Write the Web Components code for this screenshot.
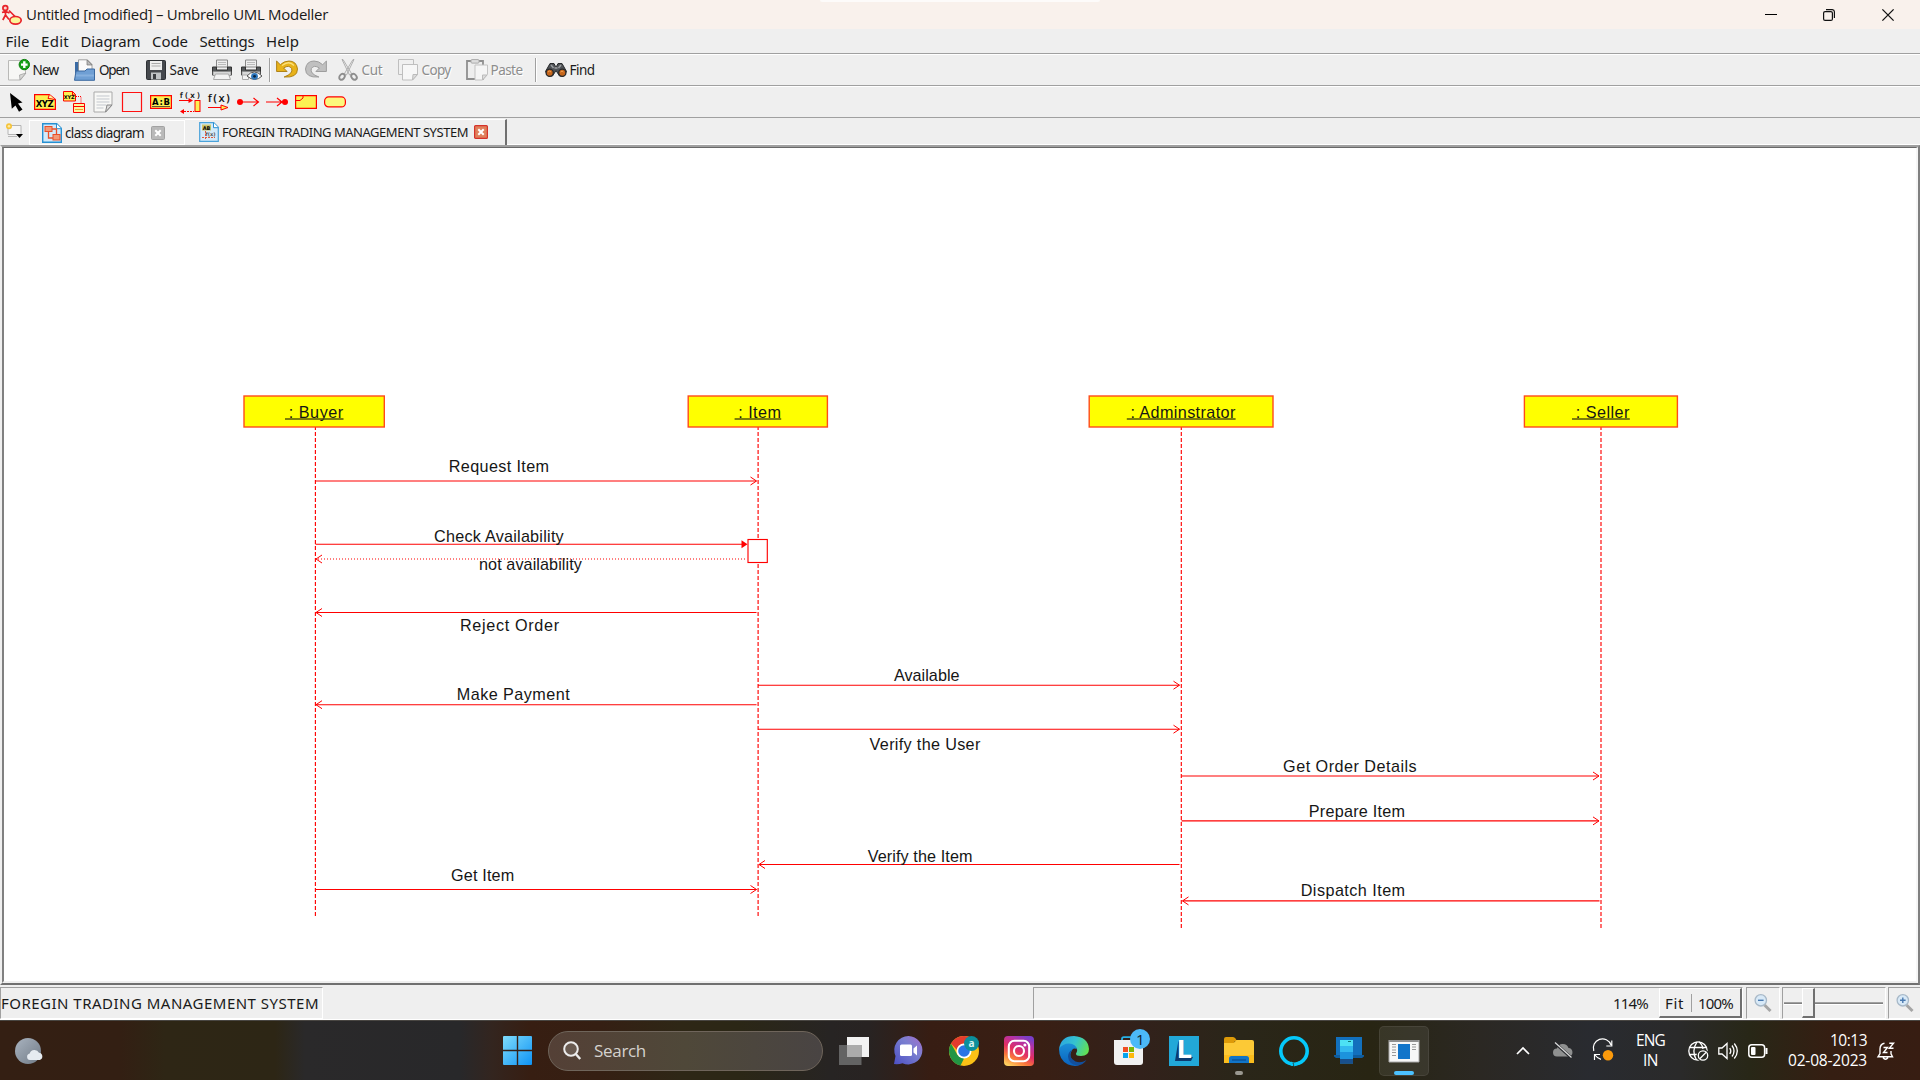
<!DOCTYPE html>
<html lang="en">
<head>
<meta charset="utf-8">
<title>Umbrello UML Modeller</title>
<style>
html,body{margin:0;height:100%;overflow:hidden;background:#efefef}
body{font-family:"Noto Sans","Open Sans",sans-serif;color:#1a1a1a}
</style>
</head>
<body>
<uml-desktop></uml-desktop>
<script>
const ICONS = {
app:[20,20,`<g fill="none" stroke="#e8232a" stroke-width="1.7"><circle cx="3.3" cy="3" r="2.4" fill="#fbd5d0"/><path d="M3.5 5.5V10M0 7.5l3.5-1 4 1.5M3.5 10L.8 15M3.5 10l3.5 4.5M7 5.5l6 6"/><ellipse cx="13.5" cy="15.3" rx="5.7" ry="3.8" fill="#fbf59a"/></g>`],
min:[12,12,`<path d="M0 5.5h12" stroke="#000"/>`],
restore:[12,12,`<g fill="none" stroke="#111" stroke-width="1.2"><rect x=".6" y="2.6" width="8.8" height="8.8" rx="1.5"/><path d="M3 .6h6.3a2.2 2.2 0 0 1 2.1 2.1V9"/></g>`],
close:[12,12,`<path d="M.4.4l11.2 11.2M11.6.4L.4 11.6" stroke="#111" stroke-width="1.3"/>`],
newdoc:[22,22,`<path d="M.5 1.5h17v13l-5 6.5H.5z" fill="#f7f7f5" stroke="#b9b9b7"/><path d="M18 14l-6 7-.5-5z" fill="#d8d8d6" stroke="#999" stroke-width=".7"/><circle cx="16.3" cy="5.6" r="5.2" fill="#16a016" stroke="#0b800b"/><path d="M16.3 2.3v6.6M13 5.6h6.6" stroke="#fff" stroke-width="2.4"/>`],
open:[22,22,`<path d="M1 3h6l2 2v9H1z" fill="#3a6aa4"/><path d="M4.500 .8h9l4.500 4.500V13H4.500z" fill="#fafafa" stroke="#8b8b8b" stroke-width=".8"/><path d="M13 1v5h5z" fill="#bbb" stroke="#777" stroke-width=".7"/><path d="M2 12h9l2-2h7.500v11.300H.5z" fill="#6f9fd4" stroke="#3b69a0"/><path d="M2 16.500h18" stroke="#87b0de" stroke-width="2"/>`],
save:[20,20,`<rect x=".5" y=".5" width="19" height="19" rx="1" fill="#45484d" stroke="#2d3034"/><rect x="4" y="1" width="12" height="9" fill="#eee"/><path d="M5.500 3.500h9M5.500 6h9" stroke="#aaa"/><rect x="5" y="12.500" width="10" height="7" fill="#bfc3c6"/><rect x="7" y="14" width="3" height="5" fill="#3b3e42"/>`],
print:[22,22,`<path d="M5.500 1h11v7h-11z" fill="#eee" stroke="#888"/><path d="M7 3.500h8M7 5.500h8" stroke="#bbb"/><path d="M1.500 8h4v3h11V8h4v8h-19z" fill="#55585a" stroke="#333"/><path d="M2 12.500h18v4H2z" fill="#d7d8d8" stroke="#888" stroke-width=".7"/><path d="M4.500 15h13l2 5.500h-17z" fill="#f3f3f3" stroke="#aaa"/>`],
preview:[22,22,`<path d="M5.500 1h11v7h-11z" fill="#eee" stroke="#888"/><path d="M7 3.500h8M7 5.500h8" stroke="#bbb"/><path d="M1.500 8h4v3h11V8h4v8h-19z" fill="#55585a" stroke="#333"/><path d="M2 12.500h18v4H2z" fill="#d7d8d8" stroke="#888" stroke-width=".7"/><path d="M2.500 16h6v4.500h-6z" fill="#f3f3f3" stroke="#aaa"/><path d="M7 17q7-8 15 0-7 7-15 0z" fill="#fff" stroke="#555"/><circle cx="14.500" cy="17.300" r="3.400" fill="#2f78bd"/><circle cx="14.500" cy="17.300" r="1.400" fill="#0c2540"/>`],
undo:[22,20,`<path d="M.6 1v10.500h10.500L7.600 8q5.500-3.500 8 .5 2 5-7.500 8.500Q21.500 18 21.500 9 20.500 1 13 1 8 1 4.300 4.700z" fill="#e8b21a" stroke="#a87a0c" stroke-width=".9"/><path d="M6 5.500q7-5.500 12 0" fill="none" stroke="#fbe07a" stroke-width="1.200"/>`],
redo:[22,20,`<g transform="matrix(-1 0 0 1 22 0)"><path d="M.6 1v10.500h10.500L7.600 8q5.500-3.500 8 .5 2 5-7.500 8.500Q21.500 18 21.500 9 20.500 1 13 1 8 1 4.300 4.700z" fill="#c0c0c0" stroke="#979797" stroke-width=".9"/></g>`],
cut:[20,22,`<path d="M4 .5l1 0 8.500 14-2 1.500zM16 .5l-1 0L6.500 14.500l2 1.500z" fill="#efefef" stroke="#a8a8a8" stroke-width=".9"/><g fill="none" stroke="#8e8e8e" stroke-width="1.900"><ellipse cx="4" cy="17.800" rx="2.400" ry="3.200" transform="rotate(40 4 17.800)"/><ellipse cx="16" cy="17.800" rx="2.400" ry="3.200" transform="rotate(-40 16 17.800)"/></g>`],
copy:[20,22,`<path d="M.5.5h15v15H.5z" fill="#f0f0f0" stroke="#bfbfbf"/><path d="M4.500 5.500h15v10l-5 5.500h-10z" fill="#f7f7f7" stroke="#bfbfbf"/><path d="M19.500 15.500h-4.500l-.5 5.500z" fill="#ddd" stroke="#bbb"/>`],
paste:[22,22,`<path d="M1 2h16v18H1z" fill="#eee" stroke="#8f8f8f" stroke-width="1.800"/><rect x="5" y=".6" width="8" height="3.500" rx="1" fill="#ddd" stroke="#aaa"/><path d="M9 6h12.500v9.500l-5 5.500H9z" fill="#f5f5f5" stroke="#c3c3c3"/><path d="M21 16h-4.500v5z" fill="#ddd" stroke="#bbb"/>`],
find:[22,14,`<path d="M5 .5h4l1.500 3h1L13 .5h4l4.500 8-3 4.500h-4L11 7.500 7.500 13h-4l-3-4.500z" fill="#505357" stroke="#27292b"/><path d="M6 2l2.500 3M16 2l-2.500 3M9.500 5h3" stroke="#9a9da0" stroke-width="1.500"/><circle cx="4.700" cy="9.800" r="3.600" fill="#c5651b" stroke="#28292b" stroke-width="1.300"/><circle cx="17.300" cy="9.800" r="3.600" fill="#c5651b" stroke="#28292b" stroke-width="1.300"/><path d="M3 9q1.500-2 3 0M15.500 9q1.500-2 3 0" stroke="#f3a251" fill="none"/>`],
pointer:[14,19,`<path d="M1 0L13.500 9.500 9 10.500 13.500 16.500 10 18.800 6.500 12.500 2.800 15.800z"/>`],
xyz:[22,16,`<path d="M.6.6h14.800l6 5v9.800H.6z" fill="#fcf052" stroke="#f00" stroke-width="1.200"/><path d="M15.400.6L14 4.500q4 0 7.400 1.500" fill="#fff7a0" stroke="#f00"/><text x="10.700" y="13" font-family="DejaVu Sans" font-size="8.500" font-weight="bold" text-anchor="middle" textLength="18">XYZ</text>`],
xyzlink:[22,22,`<path d="M.5.5h9l3 3V10h-12z" fill="#fcf052" stroke="#f00"/><path d="M9.500.5V4h3" fill="none" stroke="#f00"/><text x="6.200" y="8.300" font-family="DejaVu Sans" font-size="5" font-weight="bold" text-anchor="middle">XYZ</text><path d="M13 5.500h5V12" fill="none" stroke="#f00" stroke-dasharray="1 1"/><path d="M10.500 12.500h11v9h-11z" fill="#fcf7a0" stroke="#f00"/><path d="M10.500 15.500h11" stroke="#f00"/><path d="M12 18.500h8" stroke="#f0a030"/>`],
note:[20,22,`<path d="M1 1h18v13l-6 7H1z" fill="#f8f8f6" stroke="#a9a9a9"/><path d="M3.500 5h13M3.500 8h13M3.500 11h13M3.500 14h10M3.500 17h7" stroke="#c3c7cd"/><path d="M19 14h-5l-1.500 7z" fill="#ddd" stroke="#888"/>`],
box:[20,20,`<path d="M.5.5h19v19H.5z" fill="none" stroke="#f11" stroke-width="1.200"/>`],
ab:[22,14,`<path d="M.6.6h20.800v12.800H.6z" fill="#fcf052" stroke="#f00" stroke-width="1.200"/><text x="11" y="9.700" font-family="DejaVu Sans" font-size="8.500" font-weight="bold" text-anchor="middle" textLength="18">A:B</text><path d="M2 11.500h18" stroke="#333" stroke-width=".8"/>`],
fx1:[22,22,`<text x="11" y="6.500" font-family="DejaVu Sans" font-size="7.500" text-anchor="middle" textLength="20" stroke="#000" stroke-width=".2">f(x)</text><path d="M0 9.500h13" stroke="#f00"/><path d="M9.500 7l4.500 2.500L9.500 12z" fill="#f00"/><rect x="16" y="9.500" width="5" height="11" fill="#fcf052" stroke="#f00"/><path d="M2 20.500h13" stroke="#f00" stroke-dasharray="2 1"/><path d="M5 18l-4 2.500L5 23z" fill="#f00"/>`],
fx2:[22,18,`<text x="11" y="8.700" font-family="DejaVu Sans" font-size="10.500" text-anchor="middle" textLength="22" stroke="#000" stroke-width=".2">f(x)</text><path d="M0 14.500h14" stroke="#f00"/><path d="M13 12l7 2.500-7 2.500z" fill="#fcf052" stroke="#f00"/>`],
found:[22,10,`<circle cx="3" cy="5" r="3" fill="#f00"/><path d="M3 5h18M16.500 1l5 4-5 4" fill="none" stroke="#f00" stroke-width="1.200"/>`],
lost:[22,10,`<circle cx="19" cy="5" r="3" fill="#f00"/><path d="M0 5h18M11 1l5 4-5 4" fill="none" stroke="#f00" stroke-width="1.200"/>`],
frag:[22,14,`<path d="M.6.6h20.800v12.800H.6z" fill="#fcf052" stroke="#f00" stroke-width="1.200"/><path d="M1 5.500h4l3-2.500V1" fill="none" stroke="#f00"/>`],
pre:[22,12,`<rect x=".6" y=".9" width="20.800" height="10" rx="4" fill="#fcf87c" stroke="#f00" stroke-width="1.200"/>`],
newtab:[18,16,`<path d="M3 2.500h13v9H3z" fill="#f6f6f6" stroke="#b4b4b4"/><path d="M3 13.500h9" stroke="#b8b8b8"/><circle cx="4" cy="3.300" r="3" fill="#f5c43a"/><circle cx="4" cy="3.300" r="1.300" fill="#ffe9a0"/><path d="M11 11h7l-3.500 4z"/>`],
tabclass:[20,20,`<path d="M.7.7h14l4.600 4.600v14H.7z" fill="#d3eafa" stroke="#2690d2" stroke-width="1.400"/><path d="M14.500.7v5h5" fill="#fff" stroke="#2690d2"/><g fill="#f39a78" stroke="#e8502a"><rect x="3" y="3.500" width="7" height="5"/><rect x="11" y="11.500" width="7" height="5.500"/></g><path d="M10 6h4.500v5M6.500 9v6H11" fill="none" stroke="#e8502a" stroke-width="1.300"/>`],
tabseq:[20,20,`<path d="M.7.7h14l4.600 4.600v14H.7z" fill="#d3eafa" stroke="#4aa2da" stroke-width="1.200"/><path d="M14.500.7v5h5" fill="#fff" stroke="#2690d2"/><rect x="3" y="2.500" width="9" height="6" fill="#cfc56a"/><text x="7.500" y="7.600" font-family="DejaVu Sans" font-size="5" font-weight="bold" text-anchor="middle">AB</text><path d="M6.500 9v8M3 15.500h13" stroke="#e35b3d" stroke-dasharray="2 1"/><text x="11.500" y="13.800" font-family="DejaVu Sans" font-size="5" font-weight="bold" text-anchor="middle" fill="#555">f(x)</text>`],
xgray:[14,14,`<rect x=".5" y=".5" width="13" height="13" rx="1" fill="#b9b9b9" stroke="#a2a2a2"/><path d="M4.300 4.300l5.400 5.400M9.700 4.300L4.300 9.700" stroke="#fff" stroke-width="2"/>`],
xred:[14,14,`<rect x=".6" y=".6" width="12.800" height="12.800" rx="1" fill="#e0805c" stroke="#d5322a" stroke-width="1.200"/><path d="M4.300 4.300l5.400 5.400M9.700 4.300L4.300 9.700" stroke="#fff" stroke-width="2"/>`],
zout:[18,18,`<path d="M10.500 11l6 6" stroke="#a5a5a5" stroke-width="3"/><circle cx="6.800" cy="6.300" r="5.700" fill="#d8e9f7" stroke="#a8b9c8" stroke-width="1.300"/><path d="M4 6.300h5.600" stroke="#4a7ab0" stroke-width="1.400"/>`],
zin:[18,18,`<path d="M10.500 11l6 6" stroke="#a5a5a5" stroke-width="3"/><circle cx="6.800" cy="6.300" r="5.700" fill="#d8e9f7" stroke="#a8b9c8" stroke-width="1.300"/><path d="M4 6.300h5.600M6.800 3.500v5.600" stroke="#4a7ab0" stroke-width="1.400"/>`],
weather:[28,26,`<defs><linearGradient id="m" x1="0" y1="0" x2="1" y2="1"><stop stop-color="#a9b3bf"/><stop offset="1" stop-color="#717b87"/></linearGradient></defs><circle cx="13" cy="13" r="13" fill="url(#m)"/><path d="M15 22a3.300 3.300 0 0 1-.3-6.500A5 5 0 0 1 24 14.800a3.700 3.700 0 0 1 .8 7.200z" fill="#e6ebf1"/>`],
win:[29,29,`<defs><linearGradient id="w" x1="0" y1="0" x2="1" y2="1" gradientUnits="objectBoundingBox"><stop stop-color="#7fdcfb"/><stop offset="1" stop-color="#0e93f5"/></linearGradient></defs><path d="M0 1q0-1 1-1h12.800v13.800H0zM15.200 0H28q1 0 1 1v12.800H15.200zM0 15.200h13.800V29H1q-1 0-1-1zM15.200 15.200H29V28q0 1-1 1H15.200z" fill="url(#w)"/>`],
search:[18,19,`<circle cx="8" cy="8" r="6.800" fill="#ffffff22" stroke="#ececec" stroke-width="2"/><path d="M12.800 13l4.400 5" stroke="#ececec" stroke-width="2.400"/>`],
taskview:[30,28,`<rect x="8" y="0" width="22" height="20" fill="#f2f2f2"/><rect x="0" y="8" width="22.500" height="20" fill="#636363"/><rect x="8" y="8" width="14.500" height="12" fill="#ababab"/>`],
chat:[29,29,`<defs><linearGradient id="c" x1="1" y1="0" x2="0" y2="1"><stop stop-color="#a56ccc"/><stop offset=".4" stop-color="#7a7fd0"/><stop offset="1" stop-color="#4c4fc4"/></linearGradient></defs><path d="M14.500 0a14.200 14.200 0 1 1-6 27.200Q5 28.500 0 28L1.500 20A14.200 14.200 0 0 1 14.500 0z" fill="url(#c)"/><rect x="6" y="8.500" width="12" height="11.500" rx="1.500" fill="#fff"/><path d="M19.500 12.500l3.500-3v10l-3.500-3z" fill="#fff"/>`],
chrome:[30,30,`<circle cx="15" cy="15" r="15" fill="#fbc116"/><path d="M2 7.500L8.500 19l6.500 3.500L11.500 29.600A15 15 0 0 1 2 7.500z" fill="#229544"/><path d="M2 7.500A15 15 0 0 1 28 7.500H15q-6 1-6.500 7z" fill="#e33b2e"/><circle cx="15" cy="15" r="7.500" fill="#fff"/><circle cx="15" cy="15" r="5.800" fill="#2a75e6"/><circle cx="22.500" cy="7.500" r="7.500" fill="#0c8f9c"/><text x="22.500" y="11" font-family="Open Sans" font-size="10" font-weight="bold" fill="#d9f3f3" text-anchor="middle">a</text>`],
insta:[30,30,`<defs><linearGradient id="i" x1=".2" y1="1" x2=".7" y2="0"><stop stop-color="#fdd05f"/><stop offset=".25" stop-color="#fb7a3a"/><stop offset=".5" stop-color="#e32f63"/><stop offset=".8" stop-color="#b532a5"/><stop offset="1" stop-color="#7a3ec8"/></linearGradient></defs><rect width="30" height="30" rx="4" fill="url(#i)"/><g fill="none" stroke="#fff" stroke-width="2.100"><rect x="4.800" y="4.800" width="20.400" height="20.400" rx="5.500"/><circle cx="15" cy="15" r="5"/></g><circle cx="20.900" cy="9" r="1.500" fill="#fff"/>`],
edge:[30,30,`<defs><linearGradient id="e1" x1="0" y1=".3" x2="1" y2=".6"><stop stop-color="#2ba6e0"/><stop offset=".5" stop-color="#36c3cf"/><stop offset="1" stop-color="#62e052"/></linearGradient><linearGradient id="e2" x1="0" y1="0" x2="0" y2="1"><stop stop-color="#1b8fd8"/><stop offset="1" stop-color="#0a62bd"/></linearGradient></defs><path d="M0 13Q2 0 15 0 29 1 30 13 30 20 22 20q-5.500 0-5-2.500 2-3 .5-5.500Q10 5 0 13z" fill="url(#e1)"/><path d="M0 13q3.500-5.500 10-5.500 7 .5 8 6-2.500-2-5 .5-5 8 4 13.500 1.500 1 3.500 1.500Q16 31 9 28.500 0 24 0 13z" fill="url(#e2)"/><path d="M12.500 14q-3.500 8 4 11.500 5.500 2 11-1.500Q24 29 18.500 29.600 9.500 28.500 9 20.500q.3-4.500 3.500-6.500z" fill="#124f9c"/>`],
store:[36,36,`<path d="M8 15V10q0-1.800 1.800-1.800h9Q20 8.200 20 10v5" fill="none" stroke="#27b1e6" stroke-width="1.800"/><path d="M0 11h29v22q0 3-3 3H3q-3 0-3-3z" fill="#f1f1f1"/><path d="M9 18h5v5H9z" fill="#f04e23"/><path d="M15 18h5v5h-5z" fill="#7db705"/><path d="M9 24h5v5H9z" fill="#05a3ee"/><path d="M15 24h5v5h-5z" fill="#fdb80a"/><circle cx="26" cy="10" r="10" fill="#4cb9f8"/><text x="26.200" y="15.500" font-family="Open Sans" font-size="15" fill="#12232f" text-anchor="middle">1</text>`],
lapp:[30,30,`<rect width="30" height="30" fill="#22a8d8"/><path d="M9.500 4L6 25h16l2-4H13z" fill="#0c3b70"/><text x="7.500" y="22" font-family="Open Sans" font-size="25" font-weight="bold" fill="#fff" textLength="15.500" lengthAdjust="spacingAndGlyphs">L</text>`],
folder:[30,28,`<path d="M0 2q0-2 2-2h7q1.500 0 2.500 1.500L13 4h-2L8 9H0z" fill="#dd9a08"/><path d="M0 6h9.500l3-3H28q2 0 2 2v21H0z" fill="#fcc936"/><path d="M0 18h30v8H0z" fill="#fbbd1d"/><path d="M5 26v-4.500q0-2.500 2.500-2.500h15q2.500 0 2.500 2.500V26z" fill="#1175c8"/><path d="M8 23h14" stroke="#0a4f94" stroke-width="1.300"/>`],
alexa:[30,30,`<circle cx="15" cy="15" r="13.200" fill="none" stroke="#05c8fa" stroke-width="3.600"/><path d="M12.200 25.500q2.500 1 2.600 4.600l-3-.4z" fill="#05c8fa"/><path d="M14.800 30.500q-.3-3.200 2.700-4.300 5-1.300 6.500-3.500l1.500 2.300q-3.500 3.300-10.700 5.500z" fill="#05c8fa"/><path d="M14 27q.8 1 .7 3.500" stroke="#2b261a" stroke-width=".8" fill="none"/>`],
phone:[30,27,`<rect x="2" y="0" width="26" height="19" fill="#1270bd"/><path d="M0 18h30v1.500L28 21H2l-2-1.500z" fill="#0f5d9f"/><path d="M6 3h13v23.500H6z" fill="#1c93dd"/><path d="M6 3h13v6H6z" fill="#4de1f4"/><path d="M6 9h13v6H6z" fill="#32b9ef"/><path d="M6 22h13v4.500H6z" fill="#184f8c"/><path d="M14 4.500h3" stroke="#177"/>`],
appwin:[30,22,`<rect width="30" height="22" fill="#f7f7f7"/><path d="M0 0h30v2H0z" fill="#8f8f8f"/><rect x="9" y="4" width="12" height="15" fill="#1275ca"/><path d="M3 4.500h4M3 7h4M3 10h4M3 12.500h4M3 15.500h4M23 4.500h4M23 7h4M23 9.500h4" stroke="#999"/><path d="M0 0v22h30V0" fill="none" stroke="#aaa"/>`],
chev:[14,8,`<path d="M1 7l6-6 6 6" fill="none" stroke="#fff" stroke-width="1.700"/>`],
cloud:[20,17,`<path d="M4 14.500a4 4 0 0 1 0-8A6 6 0 0 1 15.500 6a4.300 4.300 0 0 1 .5 8.500z" fill="#8f9090"/><path d="M2 1l16.500 15" stroke="#26282c" stroke-width="3"/><path d="M2 .5l16.500 15" stroke="#ddd" stroke-width="1.200"/>`],
sync:[21,21,`<g fill="none" stroke="#fff" stroke-width="1.200"><path d="M.8 11A9 9 0 0 1 18 5M18.800.5V6h-5.500M8 19.300Q4.500 18.500 2 15M1.500 20v-5.500H7"/></g><circle cx="15" cy="15.300" r="5.200" fill="#fb9a0c"/>`],
globe:[21,20,`<g fill="none" stroke="#fff" stroke-width="1.300"><circle cx="10" cy="10" r="9.200"/><path d="M1.500 6.500h17M1.500 13.500H9M9 .8Q3 10 8.500 19M11 .8q4 3.500 4 8"/></g><circle cx="15" cy="14.500" r="6.500" fill="#292a25"/><circle cx="15" cy="14.500" r="4.700" fill="none" stroke="#fff" stroke-width="1.300"/><path d="M11.800 17.700l6.400-6.400" stroke="#fff" stroke-width="1.300"/>`],
speaker:[20,18,`<g fill="none" stroke="#fff" stroke-width="1.300"><path d="M.8 6v6H4l5 4.500v-15L4 6zM11.800 6q2 3 0 6M14 3.500q4 5.500 0 11M16.300 1.500q6 7.500 0 15"/></g>`],
battery:[20,14,`<rect x=".8" y=".8" width="15.800" height="12.400" rx="3" fill="none" stroke="#fff" stroke-width="1.500"/><rect x="3" y="3" width="4.500" height="8" rx="1" fill="#fff"/><path d="M18.500 4v6" stroke="#fff" stroke-width="2"/>`],
bell:[18,18,`<path d="M7.500 1.200Q3 2 3 7v4.500L1 14.800h14.500l-1.500-3V9M6 15.500q2.500 3.500 5 0" fill="none" stroke="#fff" stroke-width="1.400"/><path d="M6.500 5.500h4l-4 5h4M12.300 1.200h4.200l-4.200 5h4.200" fill="none" stroke="#fff" stroke-width="1.400"/>`]
};

/* <ui-icon name="…">: one inline SVG at its natural size */
customElements.define('ui-icon', class extends HTMLElement{
  connectedCallback(){
    const [w,h,b]=ICONS[this.getAttribute('name')];
    this.attachShadow({mode:'open'}).innerHTML=`<style>:host{display:block;flex:none;width:${w}px;height:${h}px}svg{display:block;overflow:visible}</style><svg width="${w}" height="${h}" viewBox="0 0 ${w} ${h}">${b}</svg>`;
  }
});

/* <fit-label w="…">: tracks its text so that it fills the given width */
customElements.define('fit-label', class extends HTMLElement{
  connectedCallback(){
    const w=+this.getAttribute('w'), r=this.attachShadow({mode:'open'});
    r.innerHTML=`<style>:host{display:block;flex:none;width:${w}px;white-space:nowrap;line-height:20px}span{display:inline-block;margin-left:-1px}</style><span><slot></slot></span>`;
    const s=r.querySelector('span'), n=this.textContent.length;
    s.style.letterSpacing=((w-s.getBoundingClientRect().width+1)/n).toFixed(3)+'px';
  }
});

customElements.define('title-bar', class extends HTMLElement{
  connectedCallback(){
    this.attachShadow({mode:'open'}).innerHTML=`<style>
    :host{display:flex;align-items:center;height:29px;background:#f9f1ec;padding:0 26px 0 2px;box-sizing:border-box;font:15px "Open Sans",sans-serif;color:#1a1a1a}
    .mid{flex:1;align-self:flex-start;display:flex;padding-left:492px}
    .mid i{width:280px;height:2px;background:#fdfbfa;border-radius:0 0 4px 4px}
    .c{display:flex;gap:47px}</style>
    <ui-icon name="app"></ui-icon><fit-label w="301" style="margin:0 0 2px 5px">Untitled [modified] – Umbrello UML Modeller</fit-label>
    <div class="mid"><i></i></div>
    <div class="c"><ui-icon name="min" style="margin-right:-1px"></ui-icon><ui-icon name="restore"></ui-icon><ui-icon name="close"></ui-icon></div>`;
  }
});

customElements.define('menu-bar', class extends HTMLElement{
  connectedCallback(){
    this.attachShadow({mode:'open'}).innerHTML=`<style>
    :host{display:flex;align-items:center;gap:12.500px;height:24px;padding-left:6.500px;font-size:15px}</style>
    <fit-label w="23">File</fit-label><fit-label w="27">Edit</fit-label><fit-label w="59">Diagram</fit-label><fit-label w="35">Code</fit-label><fit-label w="54">Settings</fit-label><fit-label w="32">Help</fit-label>`;
  }
});

/* tool-strip: a raised toolbar row with a groove above */
customElements.define('tool-strip', class extends HTMLElement{
  connectedCallback(){
    this.attachShadow({mode:'open'}).innerHTML=`<style>
    :host{display:flex;align-items:center;height:32px;box-sizing:border-box;border-top:1px solid #a0a0a0;box-shadow:inset 0 1px #fff;padding-top:1px;font-size:13.500px}</style><slot></slot>`;
  }
});
customElements.define('tool-button', class extends HTMLElement{
  connectedCallback(){
    const g=this.getAttribute('gap')||4, off=this.hasAttribute('off'), t=this.getAttribute('label');
    this.attachShadow({mode:'open'}).innerHTML=`<style>:host{display:flex;align-items:center;gap:${g}px;flex:none;${off?'color:#8d8d8d;text-shadow:1px 1px #fff':''}}</style>
    <ui-icon name="${this.getAttribute('icon')}"></ui-icon>${t?`<fit-label w="${this.getAttribute('w')}">${t}</fit-label>`:''}`;
  }
});
customElements.define('tool-sep', class extends HTMLElement{
  connectedCallback(){
    this.attachShadow({mode:'open'}).innerHTML=`<style>:host{display:block;flex:none;width:1px;height:24px;background:#a0a0a0;border-right:1px solid #fff}</style>`;
  }
});

customElements.define('tab-strip', class extends HTMLElement{
  connectedCallback(){
    this.attachShadow({mode:'open'}).innerHTML=`<style>
    :host{display:flex;height:28px;box-sizing:border-box;border-top:1px solid #a0a0a0;align-items:stretch;font-size:13.500px}
    .n{width:29px;padding:5px 0 0 5px;box-sizing:border-box}
    .a{width:156px;box-sizing:border-box;display:flex;align-items:center;margin-top:2px;padding-left:12px;border:1px solid #fff}
    .b{width:322px;box-sizing:border-box;display:flex;align-items:center;padding:0 0 2px 14px;margin-top:1px;border-top:1px solid #fff;border-right:2px solid #707070}
    .r{flex:1;border-bottom:1px solid #fff}</style>
    <div class="n"><ui-icon name="newtab"></ui-icon></div>
    <div class="a"><ui-icon name="tabclass"></ui-icon><fit-label w="78" style="margin:0 7px 0 4px">class diagram</fit-label><ui-icon name="xgray"></ui-icon></div>
    <div class="b"><ui-icon name="tabseq"></ui-icon><fit-label w="245" style="margin:0 6px 0 4px;font-size:13px">FOREGIN TRADING MANAGEMENT SYSTEM</fit-label><ui-icon name="xred"></ui-icon></div>
    <div class="r"></div>`;
  }
});

/* sequence diagram on a free canvas; coordinates are window pixels */
customElements.define('sequence-diagram', class extends HTMLElement{
  connectedCallback(){
    const objs=[
      [244,384.300,315.400,285,343.500,': Buyer',916],
      [688.200,827.400,758.100,734.600,781.200,': Item',916],
      [1089.200,1273,1181.300,1126.800,1235.600,': Adminstrator',928],
      [1524.400,1677.400,1601,1572,1629.800,': Seller',928]];
    const msgs=[
      [315.500,756.500,481,'r'],[315.500,742,544.200,'f'],[745,316,559,'d'],[756.500,316,612.500,'l'],
      [758,1179.500,685.200,'r'],[756.500,316,704.700,'l'],[758,1179.500,729.200,'r'],
      [1181.500,1599,776,'r'],[1181.500,1599,820.900,'r'],[1179.500,759,864.500,'l'],
      [315.500,756.500,889.500,'r'],[1599.500,1182.500,900.900,'l']];
    const txt=[
      ['Request Item',449,548.600,472],['Check Availability',434.300,563.200,542],['not availability',479.300,581.400,570],
      ['Reject Order',460.200,558.600,631],['Available',894.200,959.100,681],['Make Payment',457.100,569.200,700],
      ['Verify the User',869.900,979.800,750],['Get Order Details',1283.400,1416.200,772],['Prepare Item',1309,1404.600,817],
      ['Verify the Item',868,972,862],['Get Item',451.200,513.800,881],['Dispatch Item',1301,1404.600,896]];
    let s='';
    for(const [l,r,c,u1,u2,t,e] of objs){
      s+=`<path d="M${c} 426V${e}" stroke-dasharray="4 2"/>
      <rect x="${l}" y="396" width="${r-l}" height="31" fill="#ff0" stroke="#ff4b1a" stroke-width="1.400"/>
      <text x="${u1+3.7}" y="418" textLength="${u2-u1-4}">${t}</text><path d="M${u1} 419H${u2}" stroke="#55550a" stroke-width="1.600"/>`;
    }
    for(const [a,b,y,k] of msgs){
      const d=b>a?-6:6;
      s+=`<path d="M${a} ${y}H${b}" ${k=='d'?'stroke-dasharray="1 2"':''}/>`;
      s+= k=='f'?`<path d="M741.500 ${y-4}L747.500 ${y}L741.500 ${y+4}z" fill="#f00" stroke="none"/>`
               :`<path d="M${b+d} ${y-4}L${b} ${y}L${b+d} ${y+4}" stroke-width="1"/>`;
    }
    s+=`<rect x="748" y="539.500" width="19.300" height="23" fill="#fff"/>`;
    for(const [t,l,r,y] of txt) s+=`<text x="${l-.3}" y="${y}" textLength="${r-l+.8}">${t}</text>`;
    this.attachShadow({mode:'open'}).innerHTML=`<style>
    :host{display:block;height:840px;box-sizing:border-box;border:solid;border-width:2px;border-color:#a0a0a0 #808080 #707070 #efefef;background:#fff}
    .in{height:836px;box-sizing:border-box;border:solid;border-width:1px 2px 2px 2px;border-color:#696969 #f6f6f6 #efefef #808080}
    svg{display:block}
    text{font:16.200px "Liberation Sans",Arial,sans-serif;fill:#161616;stroke:none}</style>
    <div class="in"><svg width="1912" height="833" viewBox="4 148 1912 833" fill="none" stroke="#f00" stroke-width="1.140">${s}</svg></div>`;
  }
});

customElements.define('status-bar', class extends HTMLElement{
  connectedCallback(){
    this.attachShadow({mode:'open'}).innerHTML=`<style>
    :host{display:flex;align-items:flex-start;height:35px;box-sizing:border-box;padding-top:2px;font-size:15px;background:#efefef;border-bottom:1px solid #fff}
    .f{height:32px;box-sizing:border-box;border:1px solid;border-color:#a0a0a0 #fff #fff #a0a0a0;display:flex;align-items:center;flex:none}
    .g{display:flex;align-items:center;height:30px;width:83px;box-sizing:border-box;border:solid;border-width:1px 2px 2px 1px;border-color:#fff #707070 #707070 #fff;padding-left:6px;margin-left:11px}
    .s{width:1px;height:18px;background:#a0a0a0;margin:0 7px 0 7px}
    .line{height:1px;background:#808080;border-bottom:1px solid #fff;border-top:1px solid #a0a0a0}
    .h{width:13px;height:30px;box-sizing:border-box;border:solid;border-width:1px 2px 2px 1px;border-color:#fff #707070 #707070 #fff}</style>
    <div class="f" style="width:323px;padding-left:1px"><fit-label w="317">FOREGIN TRADING MANAGEMENT SYSTEM</fit-label></div>
    <div class="f" style="width:710px;margin-left:710px;justify-content:flex-end">
      <fit-label w="34">114%</fit-label><div class="g"><fit-label w="18">Fit</fit-label><div class="s"></div><fit-label w="34">100%</fit-label></div></div>
    <div class="f" style="width:34px;margin-left:3px;padding-left:7px"><ui-icon name="zout"></ui-icon></div>
    <div class="f" style="width:104px;margin-left:2px"><div class="line" style="width:18px;margin-left:1px"></div><div class="h"></div><div class="line" style="width:68px"></div></div>
    <div class="f" style="width:34px;margin-left:2px;padding-left:7px"><ui-icon name="zin"></ui-icon></div>`;
  }
});

customElements.define('task-icon', class extends HTMLElement{
  connectedCallback(){
    const m=this.getAttribute('mark');
    this.attachShadow({mode:'open'}).innerHTML=`<style>
    :host{display:grid;flex:none;grid-template-rows:45px 5px;width:55px;height:50px;justify-items:center}
    .b{width:50px;height:50px;box-sizing:border-box;display:flex;align-items:center;justify-content:center;border-radius:5px;${m=='on'?'background:#ffffff14;border:1px solid #ffffff12':''}}
    .m{align-self:start;height:4px;border-radius:2px;width:${m=='on'?20:8}px;background:${m=='on'?'#4cc2ff':m?'#9a9890':'transparent'}}</style>
    <div class="b"><slot></slot></div><div class="m"></div>`;
  }
});

customElements.define('task-bar', class extends HTMLElement{
  connectedCallback(){
    this.attachShadow({mode:'open'}).innerHTML=`<style>
    :host{display:flex;align-items:center;height:60px;box-sizing:border-box;border-top:1px solid #494642;color:#fff;font:15.500px "Open Sans",sans-serif;
    background:linear-gradient(90deg,#341f13 0,#331f13 120px,#2e2615 165px,#2d2615 275px,#2a292a 305px,#28282a 460px,#33251f 492px,#371e12 530px,#351f13 600px,#2e2716 680px,#2b2716 740px,#272423 830px,#282322 870px,#371d13 930px,#391f14 1040px,#32211b 1140px,#2a2619 1240px,#282513 1370px,#2b2823 1480px,#292b30 1590px,#2a2a2a 1680px,#282717 1750px,#351e12 1830px,#371d12 1920px)}
    .pill{display:flex;align-items:center;width:275px;height:40px;box-sizing:border-box;border:1px solid #6f655b;border-radius:20px;padding-left:14px;margin:0 3px 0 16px;background:linear-gradient(90deg,#544036,#4f4839 50%,#494443);color:#d5d2ce;flex:none;font-size:17px}
    .t{display:flex;flex-direction:column;align-items:flex-end;flex:none;padding-bottom:1px}</style>
    <ui-icon name="weather" style="margin-left:15px"></ui-icon>
    <ui-icon name="win" style="margin-left:460px"></ui-icon>
    <div class="pill"><ui-icon name="search"></ui-icon><fit-label w="51" style="margin-left:14px">Search</fit-label></div>
    <task-icon><ui-icon name="taskview"></ui-icon></task-icon>
    <task-icon><ui-icon name="chat"></ui-icon></task-icon>
    <task-icon><ui-icon name="chrome"></ui-icon></task-icon>
    <task-icon><ui-icon name="insta"></ui-icon></task-icon>
    <task-icon><ui-icon name="edge"></ui-icon></task-icon>
    <task-icon><ui-icon name="store" style="margin:-7px 0 0 6px"></ui-icon></task-icon>
    <task-icon><ui-icon name="lapp"></ui-icon></task-icon>
    <task-icon mark="open"><ui-icon name="folder"></ui-icon></task-icon>
    <task-icon><ui-icon name="alexa"></ui-icon></task-icon>
    <task-icon><ui-icon name="phone"></ui-icon></task-icon>
    <task-icon mark="on"><ui-icon name="appwin"></ui-icon></task-icon>
    <ui-icon name="chev" style="margin-left:85px"></ui-icon>
    <ui-icon name="cloud" style="margin-left:23px"></ui-icon>
    <ui-icon name="sync" style="margin-left:20px"></ui-icon>
    <div class="t" style="align-items:center;margin-left:23px"><fit-label w="28">ENG</fit-label><fit-label w="14">IN</fit-label></div>
    <ui-icon name="globe" style="margin-left:23px"></ui-icon>
    <ui-icon name="speaker" style="margin-left:9px"></ui-icon>
    <ui-icon name="battery" style="margin-left:10px"></ui-icon>
    <div class="t" style="margin-left:21px"><fit-label w="36">10:13</fit-label><fit-label w="78">02-08-2023</fit-label></div>
    <ui-icon name="bell" style="margin-left:10px"></ui-icon>`;
  }
});

customElements.define('uml-desktop', class extends HTMLElement{
  connectedCallback(){
    const b=(icon,ml,label,w,gap,off)=>`<tool-button icon="${icon}" style="margin-left:${ml}px" ${label?`label="${label}" w="${w}" gap="${gap}"`:''} ${off?'off':''}></tool-button>`;
    this.attachShadow({mode:'open'}).innerHTML=`<style>:host{display:flex;flex-direction:column;width:1920px;height:1080px;background:#efefef}:host>*{flex:none}</style>
    <title-bar></title-bar><menu-bar></menu-bar>
    <tool-strip>${b('newdoc',8,'New',25,3.5)}${b('open',15.5,'Open',29,4)}${b('save',17,'Save',28,4.5)}${b('print',12.5)}${b('preview',7)}<tool-sep style="margin-left:7px"></tool-sep>${b('undo',5)}${b('redo',7)}${b('cut',11,'Cut',20,4.5,1)}${b('copy',15.5,'Copy',28,4.5,1)}${b('paste',15.5,'Paste',31,3.5,1)}<tool-sep style="margin-left:12.500px"></tool-sep>${b('find',8,'Find',24,3.500)}</tool-strip>
    <tool-strip>${b('pointer',9)}${b('xyz',11)}${b('xyzlink',7)}${b('note',8)}${b('box',9)}${b('ab',8)}${b('fx1',7)}${b('fx2',7)}${b('found',7)}${b('lost',7)}${b('frag',7)}${b('pre',7)}</tool-strip>
    <tab-strip></tab-strip>
    <sequence-diagram></sequence-diagram>
    <status-bar></status-bar>
    <task-bar></task-bar>`;
  }
});
</script>
</body>
</html>
